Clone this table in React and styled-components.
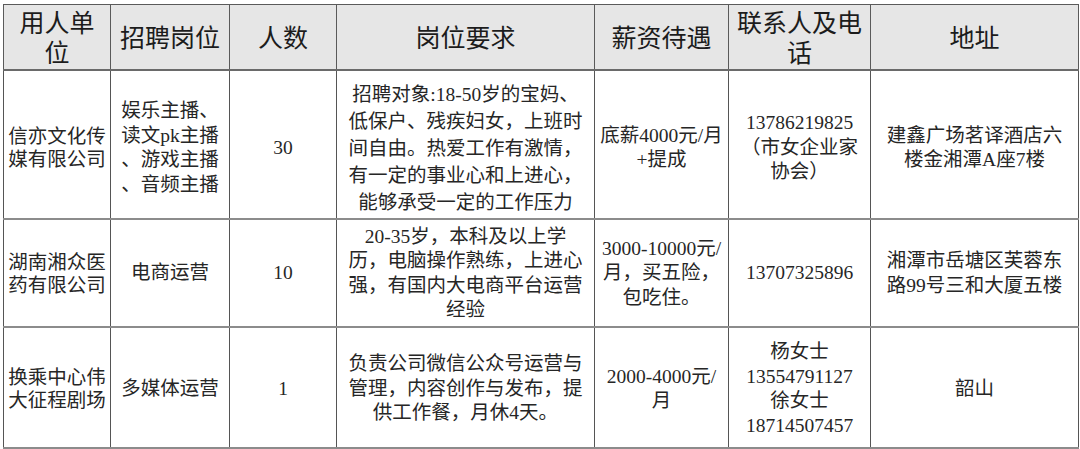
import React from "react";
import styled, { createGlobalStyle } from "styled-components";

const GlobalStyle = createGlobalStyle`
  html, body {
    margin: 0;
    padding: 0;
    background: #fff;
  }
  body {
    font-family: "Liberation Serif", "Noto Sans CJK SC", serif;
    color: #262626;
  }
`;

const Page = styled.div`
  width: 1080px;
  height: 449px;
  padding: 4px 0 0 3px;
  box-sizing: border-box;
  overflow: hidden;
`;

const Table = styled.table`
  border-collapse: collapse;
  table-layout: fixed;
  width: 1075px;
  border: 1.5px solid #4a4a4a;
`;

const HeadCell = styled.th`
  height: 61px;
  padding: 3px 0 0;
  background: #e6e6e6;
  color: #1c1c1c;
  font-weight: normal;
  font-size: 25px;
  line-height: 30px;
  text-align: center;
  vertical-align: middle;
  border: 1px solid #5a5a5a;
  border-bottom: 2px solid #6a6a6a;
`;

const Cell = styled.td`
  height: ${(p) => p.$h}px;
  padding: ${(p) => p.$pt || 0}px 0 0;
  font-size: 19.5px;
  line-height: ${(p) => p.$lh || 24.5}px;
  text-align: center;
  vertical-align: middle;
  white-space: nowrap;
  border-left: 1px solid #555;
  border-right: 1px solid #555;
  border-bottom: 2px solid #8c8c8c;
`;

const Line = styled.span`
  display: block;
`;

const widths = [107, 119, 107, 258, 134, 142, 208];

const headers = [
  ["用人单", "位"],
  ["招聘岗位"],
  ["人数"],
  ["岗位要求"],
  ["薪资待遇"],
  ["联系人及电", "话"],
  ["地址"],
];

const rows = [
  {
    h: 140,
    pt: 7,
    cells: [
      { lines: ["信亦文化传", "媒有限公司"], lh: 23 },
      { lines: ["娱乐主播、", "读文pk主播", "、游戏主播", "、音频主播"] },
      { lines: ["30"] },
      {
        lh: 27,
        lines: [
          "招聘对象:18-50岁的宝妈、",
          "低保户、残疾妇女，上班时",
          "间自由。热爱工作有激情，",
          "有一定的事业心和上进心，",
          "能够承受一定的工作压力",
        ],
      },
      { lines: ["底薪4000元/月", "+提成"] },
      { lines: ["13786219825", "（市女企业家", "协会）"] },
      { lines: ["建鑫广场茗译酒店六", "楼金湘潭A座7楼"] },
    ],
  },
  {
    h: 105,
    pt: 1,
    cells: [
      { lines: ["湖南湘众医", "药有限公司"], lh: 23 },
      { lines: ["电商运营"] },
      { lines: ["10"] },
      {
        lines: [
          "20-35岁，本科及以上学",
          "历，电脑操作熟练，上进心",
          "强，有国内大电商平台运营",
          "经验",
        ],
      },
      { lines: ["3000-10000元/", "月，买五险，", "包吃住。"] },
      { lines: ["13707325896"] },
      { lines: ["湘潭市岳塘区芙蓉东", "路99号三和大厦五楼"] },
    ],
  },
  {
    h: 116,
    pt: 3,
    cells: [
      { lines: ["换乘中心伟", "大征程剧场"], lh: 23 },
      { lines: ["多媒体运营"] },
      { lines: ["1"] },
      {
        lines: [
          "负责公司微信公众号运营与",
          "管理，内容创作与发布，提",
          "供工作餐，月休4天。",
        ],
      },
      { lines: ["2000-4000元/", "月"] },
      { lines: ["杨女士", "13554791127", "徐女士", "18714507457"] },
      { lines: ["韶山"] },
    ],
  },
];

const Lines = ({ lines }) =>
  lines.map((text, i) => <Line key={i}>{text}</Line>);

export default function App() {
  return (
    <Page>
      <GlobalStyle />
      <Table>
        <colgroup>
          {widths.map((w, i) => (
            <col key={i} style={{ width: w }} />
          ))}
        </colgroup>
        <thead>
          <tr>
            {headers.map((h, i) => (
              <HeadCell key={i}>
                <Lines lines={h} />
              </HeadCell>
            ))}
          </tr>
        </thead>
        <tbody>
          {rows.map((row, r) => (
            <tr key={r}>
              {row.cells.map((c, i) => (
                <Cell key={i} $h={row.h} $pt={row.pt} $lh={c.lh}>
                  <Lines lines={c.lines} />
                </Cell>
              ))}
            </tr>
          ))}
        </tbody>
      </Table>
    </Page>
  );
}
